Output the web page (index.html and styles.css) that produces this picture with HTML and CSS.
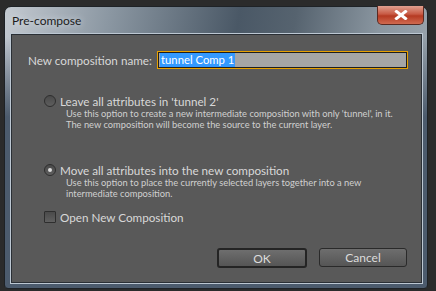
FILE: index.html
```html
<!DOCTYPE html>
<html lang="en">
<head>
    <meta charset="UTF-8" />
    <title>Pre-compose</title>
    <link rel="stylesheet" href="styles.css">
</head>
<body>
    <div class="window">
        <div class="titlebar">
            <span class="title">Pre-compose</span>
            <button class="close">
                <svg width="16" height="10" viewBox="0 0 16 10">
                    <path d="M3.5 1.5 L12.5 8.5 M12.5 1.5 L3.5 8.5" stroke="#ffffff" stroke-width="3" stroke-linecap="square" />
                </svg>
            </button>
        </div>
        <div class="panel">
            <div class="name-row">
                <label for="name">New composition name:</label>
                <div class="name-input"><span class="sel">tunnel Comp 1</span></div>
            </div>

            <div class="option first">
                <div class="opt-line"><span class="radio"></span>Leave all attributes in 'tunnel 2'</div>
                <p class="desc">Use this option to create a new intermediate composition with only 'tunnel', in it.<br>The new composition will become the source to the current layer.</p>
            </div>

            <div class="option second">
                <div class="opt-line"><span class="radio on"></span>Move all attributes into the new composition</div>
                <p class="desc">Use this option to place the currently selected layers together into a new<br>intermediate composition.</p>
            </div>

            <div class="opt-line check-line"><span class="check"></span>Open New Composition</div>

            <div class="buttons">
                <button class="btn default">OK</button>
                <button class="btn">Cancel</button>
            </div>
        </div>
    </div>
</body>
</html>
```

FILE: styles.css
```css
body {
    margin: 0;
    background-color: #2b2b2b;
    font-family: Lato, "Liberation Sans", sans-serif;
    width: 436px;
    height: 291px;
    overflow: hidden;
}

.window {
    margin: 6px 0 0 4px;
    width: 424px;
    height: 283px;
    box-sizing: border-box;
    border: 1px solid #1e2226;
    border-radius: 7px 7px 4px 4px;
    background:
        linear-gradient(rgba(76, 92, 110, 0) 0px, rgba(76, 92, 110, 0) 30px, #4c5b6d 110px),
        linear-gradient(100deg, #c4cad1 0%, #8c98a3 22%, #4a5866 50%, #56636f 62%, #8a96a0 80%, #a2abb3 100%);
    padding: 0 4px 4px 5px;
    display: flex;
    flex-direction: column;
}

.titlebar {
    height: 26px;
    display: flex;
    align-items: flex-start;
    justify-content: space-between;
    flex-shrink: 0;
}

.title {
    font-size: 12px;
    color: #1c1c1c;
    margin: 6px 0 0 2px;
    text-shadow: 0 0 6px #dfe6ee;
}

.close {
    width: 47px;
    height: 19px;
    margin-top: -1px;
    margin-right: -1px;
    border: 1px solid #5a2a22;
    border-top: none;
    border-radius: 0 0 5px 5px;
    background: linear-gradient(#e0a090 0%, #c85a44 45%, #b53a22 55%, #d06a50 100%);
    display: flex;
    align-items: center;
    justify-content: center;
    padding: 0;
}

.panel {
    flex: 1;
    background-color: #595959;
    border: 1px solid #bcc7d2;
    box-shadow: inset 0 0 0 1px #2a2f35;
    padding: 0 14px 0 17px;
    display: flex;
    flex-direction: column;
    color: #d6d6d6;
    font-size: 11.7px;
    min-height: 0;
}

.name-row {
    display: flex;
    align-items: center;
    margin-top: 17px;
    height: 18px;
}

.name-row label {
    white-space: nowrap;
    width: 129px;
    color: #d8d8d8;
}

.name-input {
    flex: 1;
    height: 18px;
    box-sizing: border-box;
    border: 1px solid #e8a000;
    box-shadow: inset 0 0 0 1px #1e1e1e;
    background-color: #a5a5a5;
    padding: 0 2px;
    display: flex;
    align-items: center;
    font-size: 11.3px;
}

.sel {
    background-color: #3399ff;
    color: #ffffff;
    line-height: 14px;
    padding: 0 1px;
}

.option.first {
    margin-top: 25px;
}

.option.second {
    margin-top: 33px;
}

.opt-line {
    display: flex;
    align-items: center;
    height: 14px;
    margin-left: 16px;
    color: #d8d8d8;
    white-space: nowrap;
}

.radio {
    width: 10px;
    height: 10px;
    border-radius: 50%;
    border: 1px solid #2e2e2e;
    background: linear-gradient(#4a4a4a, #5e5e5e);
    margin-right: 4px;
    display: flex;
    align-items: center;
    justify-content: center;
}

.radio.on::after {
    content: "";
    width: 4px;
    height: 4px;
    border-radius: 50%;
    background-color: #dcdcdc;
}

.desc {
    margin: 0 0 0 38px;
    font-size: 9.3px;
    line-height: 11px;
    color: #d0d0d0;
    white-space: nowrap;
}

.check-line {
    margin-top: 11px;
}

.check {
    width: 10px;
    height: 10px;
    border: 1px solid #2e2e2e;
    border-radius: 1px;
    background: linear-gradient(#4a4a4a, #606060);
    margin-right: 4px;
}

.buttons {
    display: flex;
    justify-content: flex-end;
    gap: 12px;
    margin-top: auto;
    margin-bottom: 15px;
    padding-right: 1px;
}

.btn {
    width: 88px;
    height: 19px;
    box-sizing: border-box;
    border: 1px solid #2a2a2a;
    border-radius: 3px;
    background: linear-gradient(#6e6e6e, #555555);
    color: #dcdcdc;
    font-family: Lato, "Liberation Sans", sans-serif;
    font-size: 12px;
    padding: 0;
}

.btn.default {
    border: 2px solid #242424;
    width: 90px;
    height: 20px;
}
```
